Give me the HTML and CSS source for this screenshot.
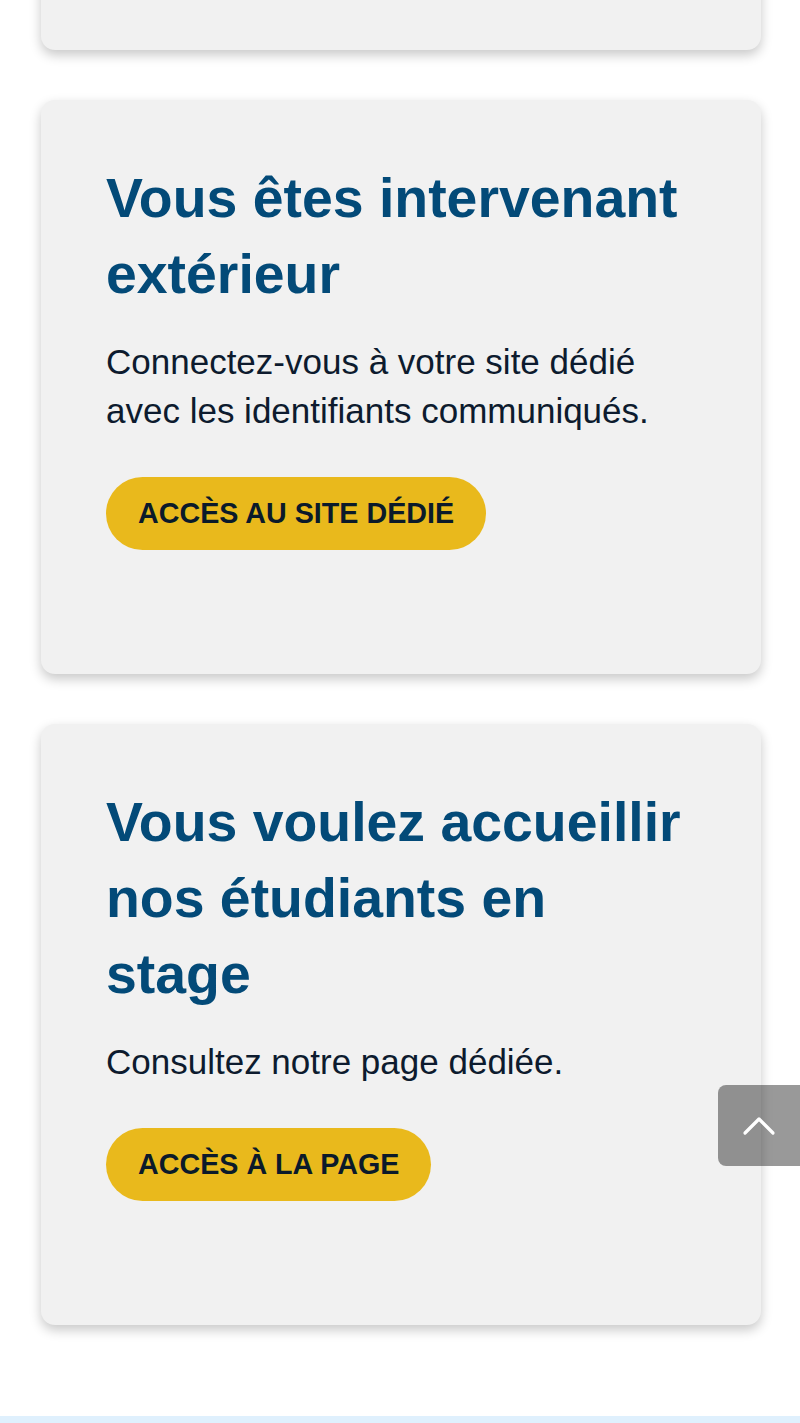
FILE: index.html
```html
<!DOCTYPE html>
<html lang="fr">
<head>
    <meta charset="UTF-8">
    <meta name="viewport" content="width=device-width, initial-scale=1.0">
    <title>Espace partenaires</title>
    <link rel="stylesheet" href="styles.css">
</head>
<body>
    <main class="cards">
        <!-- Previous card, scrolled mostly out of view -->
        <section class="card card-previous"></section>

        <section class="card">
            <h2>Vous êtes intervenant extérieur</h2>
            <p>Connectez-vous à votre site dédié avec les identifiants communiqués.</p>
            <a class="btn" href="#">Accès au site dédié</a>
        </section>

        <section class="card">
            <h2>Vous voulez accueillir nos étudiants en stage</h2>
            <p>Consultez notre page dédiée.</p>
            <a class="btn" href="#">Accès à la page</a>
        </section>
    </main>

    <footer class="footer"></footer>

    <!-- Back to top -->
    <a class="back-to-top" href="#" aria-label="Haut de page">
        <svg width="34" height="20" viewBox="0 0 34 20" fill="none">
            <path d="M3 17 L17 3 L31 17" stroke="#fff" stroke-width="3.2" stroke-linecap="round" stroke-linejoin="round"/>
        </svg>
    </a>
</body>
</html>
```

FILE: styles.css
```css
body {
    margin: 0;
    background: #fff;
    font-family: "Liberation Sans", Arial, sans-serif;
    color: #0d1b2e;
}

/* Card list */
.cards {
    display: flex;
    flex-direction: column;
    gap: 50px;
    padding: 0 39px 91px 41px;
}

.card {
    background: #f1f1f1;
    border-radius: 14px;
    box-shadow: 0 5px 12px rgba(0, 0, 0, 0.22);
    padding: 60px 65px 124px;
}

.card-previous {
    margin-top: -60px;
    height: 110px;
    padding: 0;
}

h2 {
    font-size: 55.4px;
    line-height: 76px;
    font-weight: 700;
    color: #034a78;
    margin: 0 0 25px;
}

p {
    font-size: 35px;
    line-height: 49px;
    margin: 0 0 42px;
}

/* Yellow pill button */
.btn {
    display: inline-block;
    padding: 17px 32px;
    font-size: 28.7px;
    line-height: 39px;
    font-weight: 700;
    text-transform: uppercase;
    text-decoration: none;
    color: #0b1a2a;
    background-color: #e9b91c;
    border-radius: 40px;
}

.footer {
    height: 40px;
    background: #dff0fd;
}

/* Back to top button */
.back-to-top {
    position: fixed;
    right: 0;
    bottom: 257px;
    width: 82px;
    height: 81px;
    display: flex;
    align-items: center;
    justify-content: center;
    background: rgba(0, 0, 0, 0.4);
    border-radius: 8px 0 0 8px;
}
```
